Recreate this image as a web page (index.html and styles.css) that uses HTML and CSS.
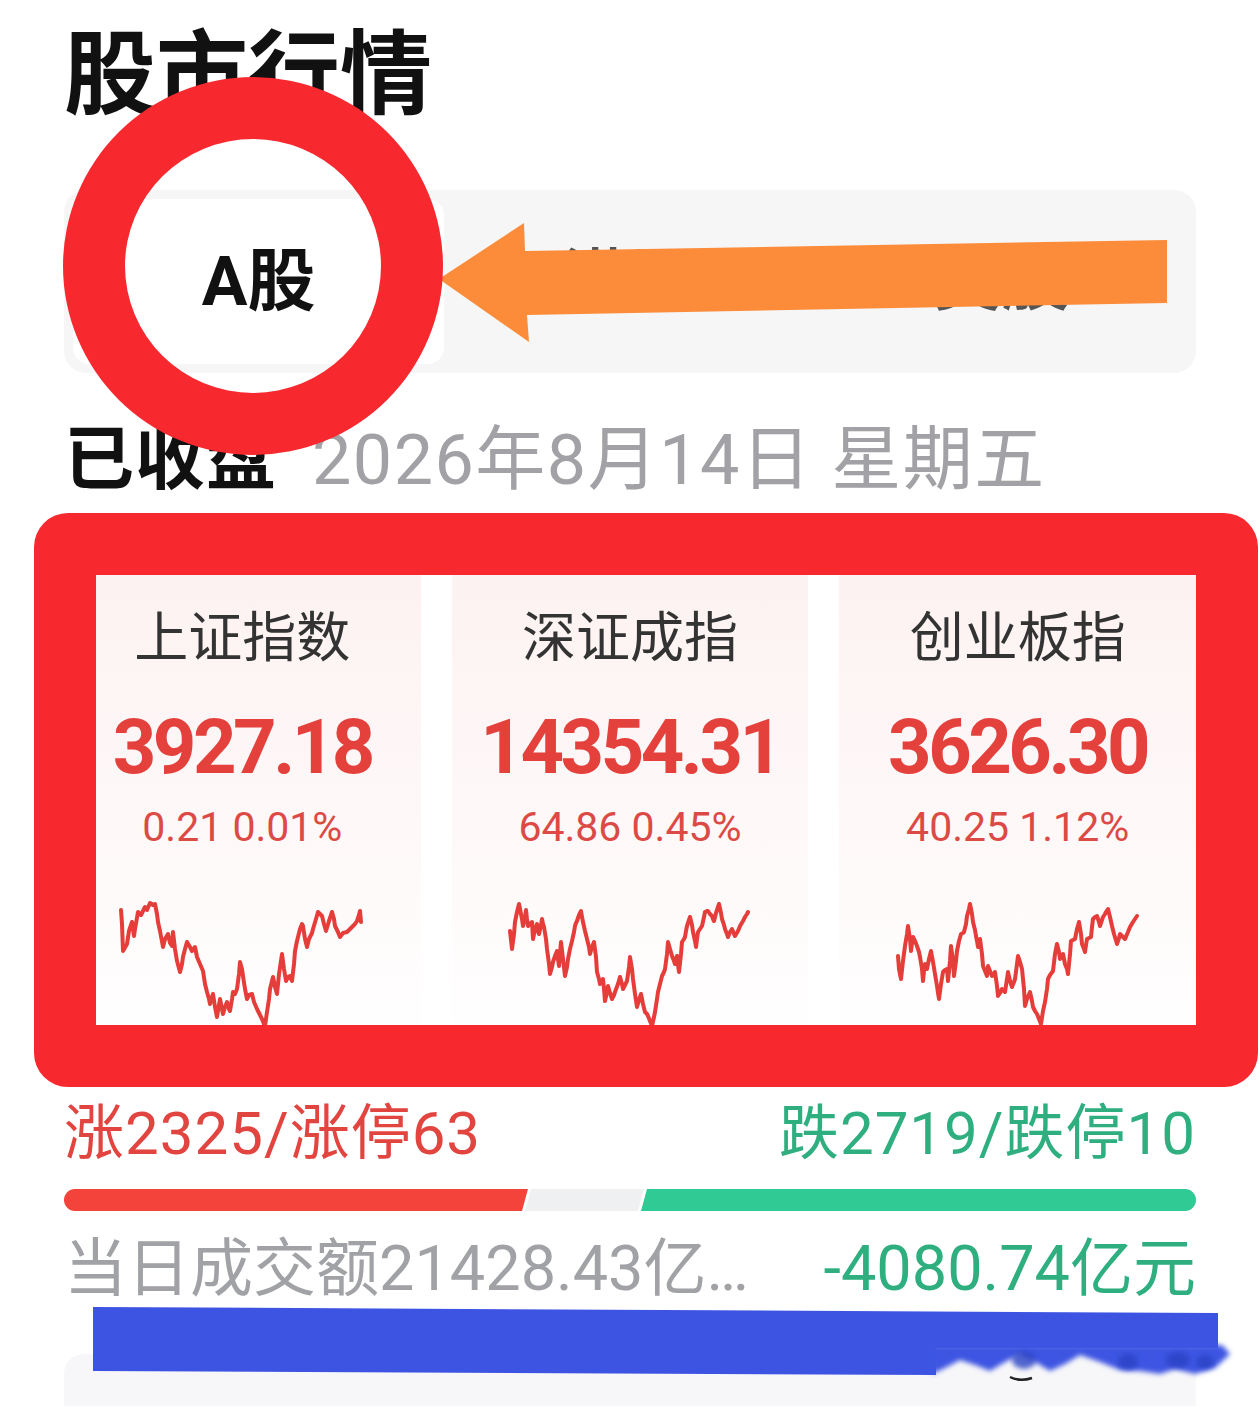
FILE: index.html
```html
<!DOCTYPE html>
<html lang="zh-CN">
<head>
<meta charset="utf-8">
<title>股市行情</title>
<link rel="stylesheet" href="styles.css">
</head>
<body>
<div class="page">
  <h1 class="title">股市行情</h1>

  <div class="tabs">
    <div class="tab active">A股</div>
    <div class="tab">港股</div>
    <div class="tab">美股</div>
  </div>

  <div class="status">
    <span class="closed">已收盘</span>
    <span class="date">2026年8月14日 星期五</span>
  </div>

  <div class="cards">
    <div class="card">
      <div class="card-name">上证指数</div>
      <div class="card-value">3927.18</div>
      <div class="card-change">0.21 0.01%</div>
      <svg class="spark" viewBox="117 900 250 132" width="250" height="132">
        <polyline points="121,911 122,925 123,952 127,945 129,932 132,923 134,937 135,930 138,913 141,916 145,908 147,911 150,904 153,906 155,905 157,915 158,923 160,932 163,948 165,940 168,935 170,944 172,947 173,933 175,950 177,962 180,973 182,965 183,958 185,950 187,943 190,948 192,952 195,948 197,958 200,965 203,972 205,985 207,993 209,1000 210,1005 212,998 213,995 215,1008 217,1018 219,1006 220,1000 222,1010 223,1015 225,1008 227,1003 229,1010 230,1012 232,1000 233,993 235,995 237,990 239,975 240,963 242,970 243,977 245,990 247,1000 249,996 252,995 254,1003 257,1010 260,1016 262,1020 264,1025 265,1027 267,1013 269,1000 270,990 272,982 273,978 275,988 277,995 279,975 282,955 284,970 286,982 288,978 290,977 292,982 294,965 295,952 297,942 300,930 302,925 303,927 305,940 307,948 309,940 310,938 312,934 313,930 316,920 318,913 320,915 322,917 324,925 326,932 329,922 332,913 334,920 335,927 338,933 340,938 343,934 347,933 350,930 353,927 355,925 357,922 359,916 360,912 361,923"/>
      </svg>
    </div>
    <div class="card">
      <div class="card-name">深证成指</div>
      <div class="card-value">14354.31</div>
      <div class="card-change">64.86 0.45%</div>
      <svg class="spark" viewBox="505 900 250 132" width="250" height="132">
        <polyline points="510,932 512,950 514,935 515,923 517,913 519,905 521,915 522,920 523,927 525,918 526,911 527,920 528,927 530,925 532,923 533,940 535,930 537,925 538,932 539,935 541,926 542,920 543,925 544,928 546,940 547,950 549,965 550,975 552,968 553,963 555,957 557,952 558,960 559,967 560,955 561,943 563,960 565,977 567,968 568,960 570,950 572,942 574,933 575,927 576,924 577,922 579,916 581,912 582,918 583,923 585,932 587,940 589,948 590,955 592,948 594,943 596,958 597,973 599,980 600,985 602,982 603,980 604,990 605,1002 607,993 608,987 610,994 612,1000 614,996 615,993 618,985 620,978 622,985 623,990 625,986 627,982 629,968 630,958 632,970 633,980 635,995 637,1008 639,1001 641,995 643,1005 645,1013 647,1015 648,1017 650,1022 652,1027 654,1018 655,1013 657,1000 658,993 660,985 662,977 664,973 665,970 667,955 668,943 670,950 672,957 674,962 675,965 676,960 677,957 678,966 679,973 681,955 682,943 684,940 685,938 686,932 687,927 689,921 690,918 692,926 693,933 695,942 696,948 697,940 698,933 700,930 702,927 704,918 705,913 707,912 708,912 710,915 712,917 713,920 714,922 716,914 719,905 721,914 722,920 724,926 725,930 727,935 728,938 730,933 732,930 734,935 735,937 738,932 740,927 743,922 745,918 747,915 748,913"/>
      </svg>
    </div>
    <div class="card">
      <div class="card-name">创业板指</div>
      <div class="card-value">3626.30</div>
      <div class="card-change">40.25 1.12%</div>
      <svg class="spark" viewBox="893 900 250 132" width="250" height="132">
        <polyline points="898,957 899,970 901,980 903,962 905,947 907,935 908,927 910,940 911,952 912,944 913,938 915,942 917,947 919,953 920,958 922,970 923,982 924,972 925,965 926,968 927,970 929,960 931,952 932,958 933,963 935,975 937,987 938,994 939,1000 941,985 943,973 945,971 947,970 948,982 950,962 951,947 953,962 954,977 956,962 957,952 959,942 961,935 963,934 964,933 966,925 967,917 969,910 970,905 972,915 973,923 975,931 976,937 977,942 978,948 979,944 980,940 982,955 983,967 985,972 987,977 988,967 990,972 992,977 994,975 995,973 997,987 998,997 1000,994 1002,990 1004,992 1005,993 1007,980 1008,973 1010,982 1012,988 1014,983 1015,980 1017,965 1018,957 1020,963 1022,970 1024,990 1025,1007 1027,1000 1030,993 1032,1002 1033,1008 1035,1012 1037,1015 1039,1020 1041,1025 1043,1012 1045,1003 1047,990 1048,980 1050,976 1053,972 1055,955 1057,945 1059,953 1060,960 1062,957 1063,955 1065,965 1067,970 1068,975 1070,955 1071,942 1073,941 1075,940 1077,930 1079,923 1081,935 1082,945 1084,950 1085,953 1086,946 1087,940 1089,939 1091,938 1092,928 1093,920 1095,918 1097,917 1099,923 1100,927 1102,921 1103,918 1105,915 1106,913 1108,910 1110,918 1112,927 1114,935 1117,945 1119,939 1120,935 1123,938 1125,940 1128,933 1130,928 1133,923 1137,917"/>
      </svg>
    </div>
  </div>

  <div class="counts">
    <span class="up">涨2325/涨停63</span>
    <span class="down">跌2719/跌停10</span>
  </div>

  <div class="ratio">
    <div class="seg seg-up"></div>
    <div class="seg seg-flat"></div>
    <div class="seg seg-down"></div>
  </div>

  <div class="amount">
    <span class="total">当日成交额21428.43亿…</span>
    <span class="diff">-4080.74亿元</span>
  </div>

  <div class="next-card"></div>

  <div class="mark-ring"></div>
  <svg class="mark-arrow" viewBox="430 215 750 135" width="750" height="135">
    <polygon points="439,279 524,223 525,251 1167,240 1167,303 527,315 529,342"/>
  </svg>
  <div class="mark-box"></div>
  <svg class="mark-redact" viewBox="85 1300 1160 90" width="1160" height="90">
    <defs>
      <filter id="soft" x="-10%" y="-50%" width="120%" height="200%">
        <feGaussianBlur stdDeviation="2.5"/>
      </filter>
    </defs>
    <polygon class="redact-main" points="93,1307 1218,1313 1218,1348 936,1348 936,1375 93,1371"/>
    <path class="redact-edge" filter="url(#soft)" d="M930,1345 L1222,1345 L1230,1354 L1215,1368 L1195,1374 L1175,1369 L1160,1374 L1140,1371 L1120,1370 L1100,1362 L1080,1355 L1065,1364 L1050,1371 L1035,1362 L1020,1355 L1005,1362 L990,1371 L975,1365 L960,1360 L945,1368 L932,1374 Z"/>
    <ellipse class="redact-dot" filter="url(#soft)" cx="1024" cy="1360" rx="12" ry="9"/>
    <ellipse class="redact-dot" filter="url(#soft)" cx="1128" cy="1362" rx="10" ry="8"/>
    <ellipse class="redact-dot" filter="url(#soft)" cx="1178" cy="1360" rx="12" ry="8"/>
    <ellipse class="redact-dot" filter="url(#soft)" cx="1205" cy="1362" rx="9" ry="7"/>
    <path class="redact-stroke" d="M1010,1377 Q1020,1382 1032,1378"/>
  </svg>
</div>
</body>
</html>
```

FILE: styles.css
```css
* {
  box-sizing: border-box;
}

html, body {
  margin: 0;
  padding: 0;
  background: #ffffff;
  overflow: hidden;
}

body {
  font-family: "Roboto", "Noto Sans CJK SC", sans-serif;
  color: #111111;
}

.page {
  position: relative;
  width: 1260px;
  height: 1408px;
  padding: 25px 64px 0 64px;
  display: flex;
  flex-direction: column;
}

.title {
  margin: 0;
  font-size: 92px;
  line-height: 101px;
  font-weight: 700;
  color: #111111;
}

/* market tabs */
.tabs {
  margin-top: 64px;
  height: 183px;
  padding: 9px;
  background: #f6f6f7;
  border-radius: 22px;
  display: flex;
}

.tab {
  flex: 1;
  display: flex;
  align-items: center;
  justify-content: center;
  font-size: 68px;
  line-height: 74px;
  font-weight: 500;
  color: #555555;
  border-radius: 16px;
}

.tab.active {
  background: #ffffff;
  color: #111111;
  font-weight: 700;
}

/* closed status line */
.status {
  margin-top: 47px;
  font-size: 70px;
  line-height: 80px;
  display: flex;
  white-space: nowrap;
}

.closed {
  font-weight: 700;
  color: #111111;
  letter-spacing: 1px;
}

.date {
  margin-left: 35px;
  color: #a2a2a6;
  font-weight: 400;
  letter-spacing: 1.5px;
}

/* index cards */
.cards {
  margin-top: 35px;
  display: grid;
  grid-template-columns: repeat(3, 1fr);
  gap: 31px;
}

.card {
  height: 520px;
  padding-top: 74px;
  display: flex;
  flex-direction: column;
  align-items: center;
  background: linear-gradient(180deg, #fdf1f1 0%, #fef8f8 55%, #ffffff 100%);
  border-radius: 18px;
}

.card-name {
  font-size: 54px;
  line-height: 60px;
  color: #333333;
  white-space: nowrap;
}

.card-value {
  margin-top: 38px;
  font-size: 76px;
  line-height: 80px;
  font-weight: 700;
  letter-spacing: -3.5px;
  color: #e4413d;
  white-space: nowrap;
}

.card-change {
  margin-top: 16px;
  font-size: 41px;
  line-height: 48px;
  color: #dc4a46;
  white-space: nowrap;
}

.spark {
  display: block;
  margin-top: 48px;
  width: 250px;
  height: 132px;
  overflow: visible;
}

.spark polyline {
  fill: none;
  stroke: #e43d3a;
  stroke-width: 4;
  stroke-linejoin: round;
  stroke-linecap: round;
}

/* advance / decline counts */
.counts {
  margin-top: 46px;
  display: flex;
  justify-content: space-between;
  font-size: 60px;
  line-height: 66px;
  letter-spacing: 1px;
  white-space: nowrap;
}

.up {
  color: #e2443f;
}

.down {
  color: #2faf80;
}

.ratio {
  margin-top: 22px;
  height: 22px;
  display: flex;
}

.seg {
  height: 22px;
}

.seg-up {
  width: 464px;
  flex: 0 0 464px;
  background: #f4433a;
  border-radius: 11px 0 0 11px;
  clip-path: polygon(0 0, 100% 0, calc(100% - 6px) 100%, 0 100%);
}

.seg-flat {
  width: 119px;
  flex: 0 0 119px;
  margin-left: -3px;
  background: #eff0f2;
  clip-path: polygon(6px 0, 100% 0, calc(100% - 6px) 100%, 0 100%);
}

.seg-down {
  flex: 1;
  margin-left: -3px;
  background: #30ca94;
  border-radius: 0 11px 11px 0;
  clip-path: polygon(6px 0, 100% 0, 100% 100%, 0 100%);
}

/* turnover line */
.amount {
  margin-top: 22px;
  display: flex;
  justify-content: space-between;
  font-size: 63px;
  line-height: 71px;
  white-space: nowrap;
}

.total {
  color: #a1a2a6;
}

.diff {
  color: #2faf80;
}

.next-card {
  margin-top: 50px;
  height: 52px;
  background: #f7f7f9;
  border-radius: 20px 20px 0 0;
}

/* annotation overlays */
.mark-ring {
  position: absolute;
  left: 63px;
  top: 77px;
  width: 380px;
  height: 378px;
  border: 62px solid #f7292f;
  border-radius: 50%;
  z-index: 3;
}

.mark-arrow {
  position: absolute;
  left: 430px;
  top: 215px;
  z-index: 2;
}

.mark-arrow polygon {
  fill: #fc8c3a;
}

.mark-box {
  position: absolute;
  left: 34px;
  top: 513px;
  width: 1224px;
  height: 574px;
  border: 62px solid #f7292f;
  border-radius: 34px;
  z-index: 2;
}

.mark-redact {
  position: absolute;
  left: 85px;
  top: 1300px;
  z-index: 2;
}

.redact-main,
.redact-edge {
  fill: #3d54e2;
}

.redact-dot {
  fill: #2c43c4;
  opacity: 0.8;
}

.redact-stroke {
  fill: none;
  stroke: #222222;
  stroke-width: 2.5;
}
```
